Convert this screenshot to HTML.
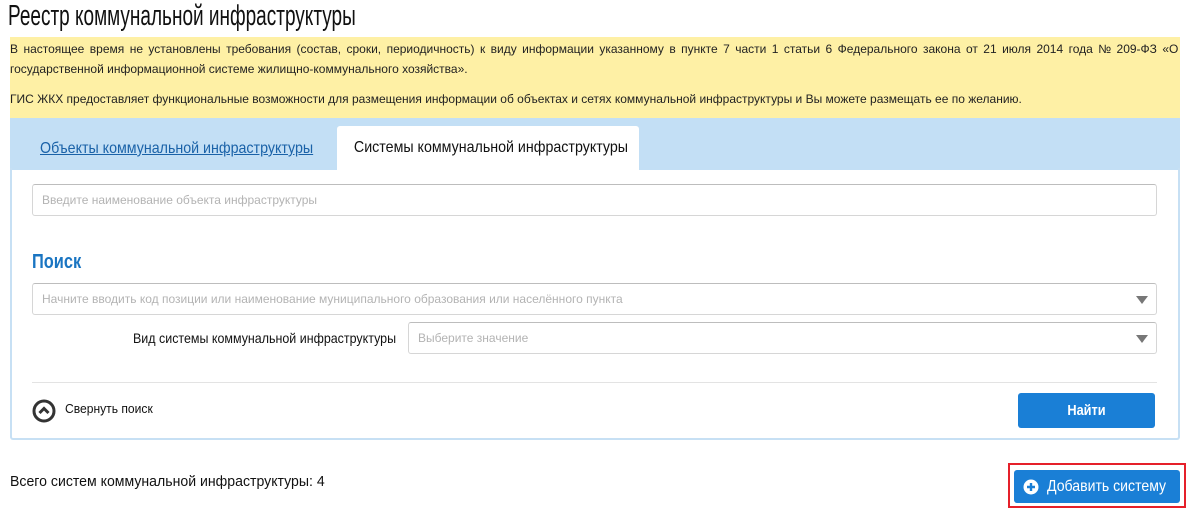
<!DOCTYPE html>
<html><head><meta charset="utf-8"><style>
*{box-sizing:border-box;margin:0;padding:0}
body{width:1193px;height:509px;background:#fff;font-family:"Liberation Sans",sans-serif;position:relative;overflow:hidden;color:#222}
.abs{position:absolute;white-space:nowrap;transform-origin:left top}
h1{position:absolute;left:8px;top:0px;font-size:29px;font-weight:normal;color:#111;white-space:nowrap;transform:scaleX(0.655);transform-origin:left top}
.yel{left:10px;top:37px;width:1170px;height:81px;background:#fef0a5;font-size:12px;line-height:20px;padding:2px 0 0 0;color:#222;white-space:normal}
.yel p{margin:0;white-space:nowrap}
.band{left:10px;top:118px;width:1170px;height:52px;background:#c3dff5}
.tab1{left:40px;top:140px;font-size:16px;color:#1a62a8;text-decoration:underline;transform:scaleX(0.89)}
.tab2{left:337px;top:126px;width:302px;height:44px;background:#fff;border-radius:3px 3px 0 0;font-size:16px;text-align:center;line-height:44px;color:#111}
.tab2 span{display:inline-block;transform:scaleX(0.89)}
.panel{left:10px;top:168px;width:1170px;height:272px;border:2px solid #c7e0f4;border-top:none;border-radius:0 0 3px 3px}
.inp{position:absolute;border:1px solid #d6d6d6;border-top-color:#bdbdbd;border-radius:3px;background:#fff;font-size:12px;color:#b3b3b3;padding-left:9px}
.arr{position:absolute;right:8px;top:12px;width:0;height:0;border-left:6px solid transparent;border-right:6px solid transparent;border-top:8px solid #777}
.btn{position:absolute;background:#1a7fd6;border-radius:3px;color:#fff;font-size:15px;font-weight:bold;text-align:center}
</style></head><body>
<h1>Реестр коммунальной инфраструктуры</h1>
<div class="abs yel"><p><span style="word-spacing:2.1px">В настоящее время не установлены требования (состав, сроки, периодичность) к виду информации указанному в пункте 7 части 1 статьи 6 Федерального закона от 21 июля 2014 года № 209-ФЗ «О</span><br>государственной информационной системе жилищно-коммунального хозяйства».</p><p style="margin-top:10px">ГИС ЖКХ предоставляет функциональные возможности для размещения информации об объектах и сетях коммунальной инфраструктуры и Вы можете размещать ее по желанию.</p></div>
<div class="abs band"></div>
<div class="abs tab1">Объекты коммунальной инфраструктуры</div>
<div class="abs tab2"><span>Системы коммунальной инфраструктуры</span></div>
<div class="abs panel"></div>
<div class="inp" style="left:32px;top:184px;width:1125px;height:32px;line-height:31px">Введите наименование объекта инфраструктуры</div>
<div class="abs" style="left:32px;top:251px;font-size:20px;font-weight:bold;color:#1a75c2;transform:scaleX(0.82)">Поиск</div>
<div class="inp" style="left:32px;top:283px;width:1125px;height:32px;line-height:31px">Начните вводить код позиции или наименование муниципального образования или населённого пункта<div class="arr"></div></div>
<div class="abs" style="left:133px;top:330px;font-size:14px;color:#111;transform:scaleX(0.89)">Вид системы коммунальной инфраструктуры</div>
<div class="inp" style="left:408px;top:322px;width:749px;height:32px;line-height:31px">Выберите значение<div class="arr"></div></div>
<div class="abs" style="left:32px;top:382px;width:1125px;height:1px;background:#e3e3e3"></div>
<svg class="abs" style="left:32px;top:399px" width="24" height="24"><circle cx="12" cy="12" r="10" fill="none" stroke="#333" stroke-width="3"/><path d="M7.5 14 L12 9.5 L16.5 14" fill="none" stroke="#333" stroke-width="3"/></svg>
<div class="abs" style="left:65px;top:401px;font-size:13px;color:#111;transform:scaleX(0.93)">Свернуть поиск</div>
<div class="btn" style="left:1018px;top:393px;width:137px;height:35px;line-height:35px"><span style="display:inline-block;transform:scaleX(0.85)">Найти</span></div>
<div class="abs" style="left:10px;top:473px;font-size:15px;color:#111;transform:scaleX(0.94)">Всего систем коммунальной инфраструктуры: 4</div>
<div class="abs" style="left:1008px;top:463px;width:178px;height:45px;border:2px solid #e5202a"></div>
<div class="btn" style="left:1014px;top:470px;width:166px;height:33px"></div>
<div class="abs" style="left:1047px;top:478px;font-size:16px;color:#fff;transform:scaleX(0.88)">Добавить систему</div>
<svg class="abs" style="left:1023px;top:479px" width="16" height="16"><circle cx="8" cy="8" r="7.5" fill="#fff"/><path d="M8 4v8M4 8h8" stroke="#1a7fd6" stroke-width="2.4"/></svg>
</body></html>
